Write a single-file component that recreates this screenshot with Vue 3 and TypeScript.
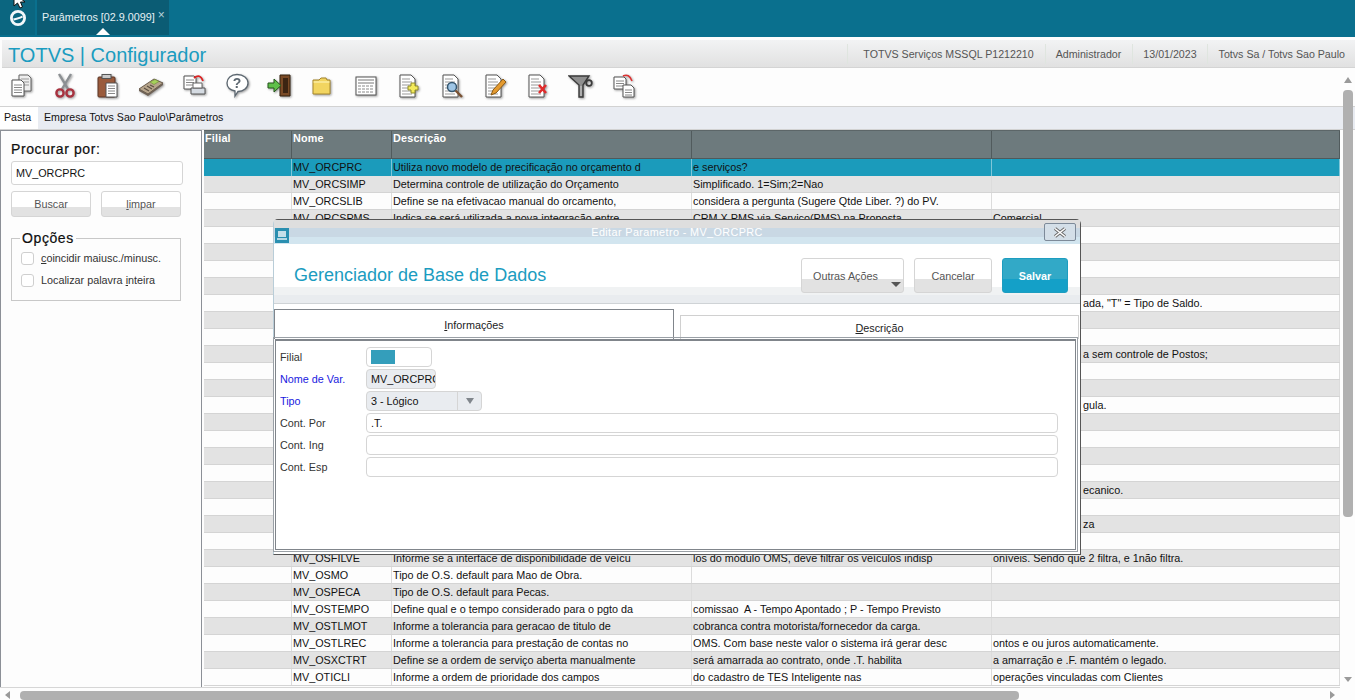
<template>
  <div class="page">
    <header class="topbar">
      <div class="logo">
        <svg width="18" height="18" viewBox="0 0 18 18">
          <circle cx="9" cy="9" r="6.6" fill="none" stroke="#f4f8fa" stroke-width="2.8" />
          <path d="M4.500 10.500 C7 9.500 11 9.500 13.500 7.500" fill="none" stroke="#f4f8fa" stroke-width="2" />
        </svg>
      </div>
      <div class="apptab">
        <span>Parâmetros [02.9.0099]</span>
        <span class="apptab-x">×</span>
        <i class="apptab-arrow"></i>
      </div>
      <svg class="cursor" width="14" height="9" viewBox="0 0 14 9">
        <path d="M1 -7 L1 6 L4.500 3 L7 8 L9.500 7 L7.500 2 L12 2 Z" fill="#fff" stroke="#111" stroke-width="1" />
      </svg>
    </header>

    <div class="titlebar">
      <h1>TOTVS | Configurador</h1>
      <ul class="status">
        <li v-for="s in statusItems" :key="s">{{ s }}</li>
      </ul>
    </div>

    <nav class="toolbar">
      <span v-for="icon in toolIcons" :key="icon" class="tool">
        <svg width="26" height="26" viewBox="0 0 26 26">
          <template v-if="icon === 'copy'">
            <path d="M10 2h9l3 3v13H10z" fill="#eee" stroke="#666" />
            <path d="M12 6h8M12 9h8M12 12h8" stroke="#999" />
            <path d="M3 7h9l3 3v13H3z" fill="#fff" stroke="#555" />
            <path d="M5 12h8M5 14.500h8M5 17h8M5 19.500h8" stroke="#888" />
          </template>
          <template v-else-if="icon === 'cut'">
            <path d="M7 1 L16 16 M19 1 L10 16" stroke="#8b8f92" stroke-width="2.400" />
            <circle cx="8" cy="20" r="3.600" fill="none" stroke="#a8323f" stroke-width="2.400" />
            <circle cx="18" cy="20" r="3.600" fill="none" stroke="#a8323f" stroke-width="2.400" />
          </template>
          <template v-else-if="icon === 'paste'">
            <rect x="3" y="4" width="17" height="20" rx="1" fill="#9a5b3c" stroke="#5b3524" />
            <rect x="7" y="1.500" width="9" height="4" fill="#c9c9c9" stroke="#555" />
            <path d="M11 10h11v14H11z" fill="#fff" stroke="#555" />
            <path d="M13 13h7M13 15.500h7M13 18h7M13 20.500h7" stroke="#888" />
          </template>
          <template v-else-if="icon === 'calc'">
            <path d="M1 16 L16 6 L25 10 L10 21 Z" fill="#b7a58c" stroke="#6a5c4b" />
            <path d="M1 16 L10 21 L25 10 L25 12 L10 23 L1 18 Z" fill="#6f6256" />
            <path d="M12 9 L17 6.500 L21 8.500 L16 11.500 Z" fill="#a6d25a" stroke="#6f8a3a" stroke-width=".6" />
            <path d="M6 15 L11 18 M9 13 L14 16 M12 12 L16 14" stroke="#5c5043" stroke-width="1.200" />
          </template>
          <template v-else-if="icon === 'print'">
            <path d="M3 3h10l2 2v11H3z" fill="#fff" stroke="#555" />
            <path d="M5 7h8M5 9.500h8M5 12h8" stroke="#888" />
            <path d="M10 15h14v6H10z" fill="#d5dbe2" stroke="#555" />
            <path d="M12 10h9v5h-9z" fill="#fff" stroke="#666" />
            <path d="M13 5 Q19 0 22 8" fill="none" stroke="#d22" stroke-width="1.800" />
          </template>
          <template v-else-if="icon === 'help'">
            <path d="M13 1.500c6.500 0 11 3.600 11 8.500s-4.500 8.500-10 8.500l-3 4.500v-5c-4.500-1-8-4-8-8 0-4.900 4-8.500 10-8.500z" fill="#fff" stroke="#5c6770" stroke-width="1.300" />
            <text x="13" y="15" text-anchor="middle" class="help-mark">?</text>
          </template>
          <template v-else-if="icon === 'exit'">
            <path d="M13 2h10v21H13z" fill="#7a4a26" stroke="#33200f" />
            <path d="M16 5h5v15h-5z" fill="#3c2412" />
            <path d="M1 10h6V6l7 6.500-7 6.500v-4H1z" fill="#5fbf4a" stroke="#26561c" />
          </template>
          <template v-else-if="icon === 'folder'">
            <path d="M3 7h6l2-2h5l1 2h3v14H3z" fill="#f2d560" stroke="#a6862a" />
            <path d="M3.500 9h16" stroke="#fff7c0" />
          </template>
          <template v-else-if="icon === 'table'">
            <rect x="3" y="4" width="20" height="18" fill="#fff" stroke="#555" />
            <path d="M5 7h16M5 10h16" stroke="#777" />
            <path d="M5 13h16M5 16h16M5 19h16" stroke="#888" stroke-dasharray="3 1" />
          </template>
          <template v-else-if="icon === 'filter'">
            <path d="M1 3 H21 L15 12 V24 H11 V12 Z" fill="#8f8f8f" stroke="#3b3b3b" stroke-width="1.400" />
            <path d="M13 13 V23" stroke="#cfcfcf" />
            <circle cx="21" cy="10" r="2.800" fill="none" stroke="#3b3b3b" stroke-width="1.800" />
          </template>
          <template v-else-if="icon === 'move'">
            <path d="M3 4h10l2 2v10H3z" fill="#fff" stroke="#555" />
            <path d="M5 8h8M5 10.500h8M5 13h8" stroke="#888" />
            <path d="M12 12h8l3 3v9H12z" fill="#fff" stroke="#555" />
            <path d="M14 17h7M14 19.500h7M14 22h7" stroke="#888" />
            <path d="M12 3 Q18 0 21 8" fill="none" stroke="#d33" stroke-width="1.600" />
          </template>
          <template v-else>
            <path d="M4 2h11l4 4v18H4z" fill="#fff" stroke="#555" />
            <path d="M6 6h8M6 9h10M6 12h10M6 15h10M6 18h10M6 21h10" stroke="#999" />
            <path v-if="icon === 'add'" d="M15 10h4v3h3v4h-3v3h-4v-3h-3v-4h3z" fill="#f3ea5a" stroke="#8f8a2b" />
            <template v-else-if="icon === 'find'">
              <circle cx="13" cy="14" r="4.500" fill="#9fc6e6" stroke="#35566f" stroke-width="1.500" />
              <path d="M16.500 17.500 L23 24" stroke="#7a5233" stroke-width="2.400" />
            </template>
            <path v-else-if="icon === 'edit'" d="M9 22 L11 17 L21 6 L24 9 L14 20 Z" fill="#e49a2f" stroke="#8a5a17" />
            <path v-else-if="icon === 'del'" d="M14 12 L21 20 M21 12 L14 20" stroke="#e02b2b" stroke-width="2.600" />
          </template>
        </svg>
      </span>
    </nav>

    <div class="pathbar">
      <div class="pathbar-tab">Pasta</div>
      <div class="pathbar-text">Empresa Totvs Sao Paulo\Parâmetros</div>
    </div>

    <main class="content">
      <aside class="side">
        <h2>Procurar por:</h2>
        <div class="field">MV_ORCPRC</div>
        <div class="side-buttons">
          <button>Buscar</button>
          <button><u>l</u>impar</button>
        </div>
        <fieldset>
          <legend>Opções</legend>
          <label><i class="check"></i><span><u>c</u>oincidir maiusc./minusc.</span></label>
          <label><i class="check"></i><span>Localizar palavra <u>i</u>nteira</span></label>
        </fieldset>
      </aside>

      <section class="grid">
        <div class="grid-head">
          <div>Filial</div>
          <div>Nome</div>
          <div>Descrição</div>
          <div></div>
          <div></div>
        </div>
        <div v-for="(row, i) in rows" :key="i" class="grid-row" :class="{ selected: i === 0, odd: i % 2 === 1 }">
          <div></div>
          <div>{{ row[0] }}</div>
          <div>{{ row[1] }}</div>
          <div>{{ row[2] }}</div>
          <div>{{ row[3] }}</div>
        </div>
      </section>

      <!-- janela modal -->
      <div class="dialog">
        <div class="dialog-title">
          <span class="dialog-icon">
            <svg width="14" height="15" viewBox="0 0 14 15">
              <rect width="14" height="15" fill="#2a8fb0" />
              <rect x="3" y="3" width="8" height="6" fill="#c5dfe9" />
              <path d="M2 11h10" stroke="#e4f1f6" stroke-width="1.500" />
            </svg>
          </span>
          <span class="dialog-caption">Editar Parametro - MV_ORCPRC</span>
          <span class="dialog-close">
            <svg width="16" height="11" viewBox="0 0 16 11">
              <path d="M3 1.500 L13 9.500 M13 1.500 L3 9.500" stroke="#666" stroke-width="3.400" />
              <path d="M3 1.500 L13 9.500 M13 1.500 L3 9.500" stroke="#fff" stroke-width="1.600" />
            </svg>
          </span>
        </div>
        <div class="dialog-head">
          <div class="dialog-name">Gerenciador de Base de Dados</div>
          <div class="dialog-actions">
            <button class="more">Outras Ações<i></i></button>
            <button class="cancel">Cancelar</button>
            <button class="save">Salvar</button>
          </div>
        </div>
        <div class="dialog-strip"></div>
        <div class="tabs">
          <div class="tab active"><u>I</u>nformações</div>
          <div class="tab"><u>D</u>escrição</div>
        </div>
        <div class="form">
          <div class="form-row">
            <label>Filial</label>
            <div class="filial"><i></i></div>
          </div>
          <div class="form-row">
            <label class="req">Nome de Var.</label>
            <div class="input readonly name">MV_ORCPRC</div>
          </div>
          <div class="form-row">
            <label class="req">Tipo</label>
            <div class="input readonly combo">
              <span>3 - Lógico</span>
              <b><i></i></b>
            </div>
          </div>
          <div class="form-row">
            <label>Cont. Por</label>
            <div class="input wide">.T.</div>
          </div>
          <div class="form-row">
            <label>Cont. Ing</label>
            <div class="input wide"></div>
          </div>
          <div class="form-row">
            <label>Cont. Esp</label>
            <div class="input wide"></div>
          </div>
        </div>
      </div>
    </main>

    <div class="hscroll">
      <i class="arrow-left"></i>
      <i class="hthumb"></i>
      <i class="arrow-right"></i>
    </div>

    <div class="vscroll">
      <i class="arrow-up"></i>
      <i class="vthumb"></i>
      <i class="arrow-down"></i>
    </div>
  </div>
</template>

<script setup lang="ts">
const statusItems: string[] = [
  'TOTVS Serviços MSSQL P1212210',
  'Administrador',
  '13/01/2023',
  'Totvs Sa / Totvs Sao Paulo',
]

const toolIcons: string[] = [
  'copy', 'cut', 'paste', 'calc', 'print', 'help', 'exit', 'folder',
  'table', 'add', 'find', 'edit', 'del', 'filter', 'move',
]

// o texto da última coluna aparece só depois da janela modal
const behind = ' '.repeat(30)

// nome, descrição, continuação 1, continuação 2
const rows: string[][] = [
  ['MV_ORCPRC', 'Utiliza novo modelo de precificação no orçamento d', 'e serviços?', ''],
  ['MV_ORCSIMP', 'Determina controle de utilização do Orçamento', 'Simplificado. 1=Sim;2=Nao', ''],
  ['MV_ORCSLIB', 'Define se na efetivacao manual do orcamento,', 'considera a pergunta (Sugere Qtde Liber. ?) do PV.', ''],
  ['MV_ORCSPMS', 'Indica se será utilizada a nova integração entre', 'CRM X PMS via Serviço(PMS) na Proposta', 'Comercial'],
  ['', '', '', ''],
  ['', '', '', ''],
  ['', '', '', ''],
  ['', '', '', ''],
  ['', '', '', behind + 'ada, "T" = Tipo de Saldo.'],
  ['', '', '', ''],
  ['', '', '', ''],
  ['', '', '', behind + 'a sem controle de Postos;'],
  ['', '', '', ''],
  ['', '', '', ''],
  ['', '', '', behind + 'gula.'],
  ['', '', '', ''],
  ['', '', '', ''],
  ['', '', '', ''],
  ['', '', '', ''],
  ['', '', '', behind + 'ecanico.'],
  ['', '', '', ''],
  ['', '', '', behind + 'za'],
  ['', '', '', ''],
  ['MV_OSFILVE', 'Informe se a interface de disponibilidade de veícu', 'los do módulo OMS, deve filtrar os veículos indisp', 'oníveis. Sendo que 2 filtra, e 1não filtra.'],
  ['MV_OSMO', 'Tipo de O.S. default para Mao de Obra.', '', ''],
  ['MV_OSPECA', 'Tipo de O.S. default para Pecas.', '', ''],
  ['MV_OSTEMPO', 'Define qual e o tempo considerado para o pgto da', 'comissao  A - Tempo Apontado ; P - Tempo Previsto', ''],
  ['MV_OSTLMOT', 'Informe a tolerancia para geracao de titulo de', 'cobranca contra motorista/fornecedor da carga.', ''],
  ['MV_OSTLREC', 'Informe a tolerancia para prestação de contas no', 'OMS. Com base neste valor o sistema irá gerar desc', 'ontos e ou juros automaticamente.'],
  ['MV_OSXCTRT', 'Define se a ordem de serviço aberta manualmente', 'será amarrada ao contrato, onde .T. habilita', 'a amarração e .F. mantém o legado.'],
  ['MV_OTICLI', 'Informe a ordem de prioridade dos campos', 'do cadastro de TES Inteligente nas', 'operações vinculadas com Clientes'],
]
</script>

<style>
html,
body {
  margin: 0;
  background: #fff;
}
</style>

<style scoped>
.page {
  position: relative;
  width: 1355px;
  height: 700px;
  overflow: hidden;
  display: flex;
  flex-direction: column;
  font-family: "Liberation Sans", Arial, sans-serif;
  font-size: 10.8px;
  color: #111;
  background: #fdfdfd;
}

/* barra superior */
.topbar {
  position: relative;
  flex: 0 0 37px;
  display: flex;
  background: #0a708e;
}
.logo {
  width: 35px;
  height: 35px;
  display: flex;
  align-items: center;
  justify-content: center;
  background: #0b6680;
}
.apptab {
  position: relative;
  margin-left: 2px;
  width: 132px;
  height: 35px;
  box-sizing: border-box;
  padding: 11px 0 0 5px;
  display: flex;
  gap: 3px;
  color: #e6f1f5;
  background: #0b5c74;
  line-height: 12px;
}
.apptab-x {
  font-size: 12px;
  line-height: 9px;
  color: #b9d2da;
}
.apptab-arrow {
  position: absolute;
  left: 59px;
  bottom: 0;
  border-left: 7px solid transparent;
  border-right: 7px solid transparent;
  border-bottom: 7px solid #fff;
}
.cursor {
  position: absolute;
  left: 13px;
  top: 0;
}

/* título */
.titlebar {
  flex: 0 0 28px;
  margin: 3px 0 0 2px;
  overflow: hidden;
  display: flex;
  justify-content: space-between;
  background: linear-gradient(#f2f3f4, #e1e1e1);
  border-bottom: 1px solid #d4d4d4;
  box-sizing: border-box;
}
.titlebar h1 {
  margin: 0 0 0 6px;
  font-size: 20px;
  font-weight: 400;
  line-height: 30px;
  color: #1b9cc0;
}
.status {
  list-style: none;
  margin: 4px 0 0;
  padding: 0;
  display: flex;
  height: 20px;
  font-size: 10.65px;
  color: #555;
}
.status li {
  padding: 0 10px;
  line-height: 20px;
  border-left: 1px solid #dfe5df;
}
.status li:first-child {
  padding-left: 15px;
  padding-right: 11px;
}
.status li:nth-child(2) {
  padding-right: 11px;
}
.status li:last-child {
  padding-left: 11px;
}

/* ícones */
.toolbar {
  flex: 0 0 38px;
  box-sizing: border-box;
  padding: 0 0 3px 9px;
  display: flex;
  align-items: center;
  background: #fdfdfd;
}
.tool {
  width: 43px;
  display: flex;
}
.tool svg {
  filter: drop-shadow(1px 1px 1px #999);
}
.help-mark {
  font-family: "Liberation Sans", Arial, sans-serif;
  font-size: 14px;
  font-weight: 700;
  fill: #5c6770;
}

.pathbar {
  flex: 0 0 24px;
  box-sizing: border-box;
  display: flex;
  font-size: 10.6px;
  line-height: 21px;
  border-top: 1px solid #d2d2d2;
  border-bottom: 1px solid #d2d2d2;
  background: #e9ecf2;
}
.pathbar-tab {
  width: 38px;
  padding-left: 4px;
  box-sizing: border-box;
  background: #fff;
}
.pathbar-text {
  padding-left: 6px;
}

/* área principal */
.content {
  position: relative;
  flex: 1;
  min-height: 0;
  display: flex;
  background: #fdfdfd;
}
.side {
  flex: 0 0 202px;
  box-sizing: border-box;
  padding: 11px 0 0 10px;
  border-left: 1px solid #8c9097;
  border-right: 1px solid #8c9097;
  border-top: 1px solid #8c9097;
  background: #fdfdfd;
}
.side h2 {
  margin: 0;
  font-size: 14px;
  font-weight: 400;
  letter-spacing: .6px;
  line-height: 14px;
  -webkit-text-stroke: .2px #000;
}
.field {
  margin-top: 5px;
  height: 24px;
  width: 172px;
  box-sizing: border-box;
  padding-left: 4px;
  line-height: 22px;
  border: 1px solid #d5d5d5;
  border-radius: 3px;
  background: #fff;
}
.side-buttons {
  margin-top: 6px;
  display: flex;
  gap: 10px;
}
.side-buttons button {
  width: 80px;
  height: 26px;
  padding: 0;
  font: inherit;
  color: #555;
  border: 1px solid #d5d5d5;
  border-radius: 3px;
  background: linear-gradient(#fff 0, #fff 61%, #e2e2e2 61%);
}
fieldset {
  margin: 14px 0 0;
  padding: 2px 0 0;
  width: 170px;
  height: 70px;
  border: 1px solid #c8c8c8;
  box-sizing: border-box;
}
legend {
  margin-left: 8px;
  padding: 0 2px;
  font-size: 14px;
  line-height: 14px;
  letter-spacing: .6px;
  -webkit-text-stroke: .2px #000;
}
fieldset label {
  display: flex;
  align-items: center;
  gap: 7px;
  height: 22px;
  padding-left: 9px;
  color: #333;
}
.check {
  width: 13px;
  height: 13px;
  box-sizing: border-box;
  border: 1px solid #cfcfcf;
  border-radius: 3px;
  background: #fff;
}

/* grade */
.grid {
  width: 1136px;
  margin-left: 2px;
  flex: none;
  overflow: hidden;
}
.grid-head,
.grid-row {
  display: grid;
  grid-template-columns: 88px 100px 300px 300px 348px;
}
.grid-head {
  height: 29px;
  box-sizing: border-box;
  line-height: 15px;
  font-weight: 700;
  color: #fff;
  letter-spacing: .2px;
  background: #6d7a7d;
  border-top: 1px solid #5c6668;
  border-bottom: 1px solid #4f595b;
}
.grid-head div {
  padding-left: 1px;
  border-right: 1px solid #515b5d;
}
.grid-row {
  height: 17px;
  box-sizing: border-box;
  line-height: 16px;
  white-space: pre;
  border-bottom: 1px solid #d4d4d4;
}
.grid-row div {
  padding-left: 1px;
  overflow: hidden;
  border-right: 1px solid #dcdcdc;
}
.grid-row.odd {
  background: #e3e3e3;
}
.grid-row.selected {
  background: #1b9bbb;
  border-bottom: 0;
}
.grid-row.selected div {
  border-right-color: #7fc6d8;
}

/* barras de rolagem */
.vscroll {
  position: absolute;
  right: 2px;
  top: 77px;
  bottom: 18px;
  width: 10px;
  display: flex;
  flex-direction: column;
  align-items: center;
}
.arrow-up {
  border-left: 4px solid transparent;
  border-right: 4px solid transparent;
  border-bottom: 6px solid #9a9a9a;
}
.vthumb {
  margin-top: 7px;
  width: 10px;
  height: 427px;
  border-radius: 4px;
  background: #b0b0b0;
}
.arrow-down {
  margin-top: auto;
  border-left: 4px solid transparent;
  border-right: 4px solid transparent;
  border-top: 5px solid #9a9a9a;
}
.hscroll {
  flex: 0 0 13px;
  box-sizing: border-box;
  width: 1340px;
  display: flex;
  align-items: flex-end;
  padding-left: 5px;
  border-top: 1px solid #d6d6d6;
  background: #fdfdfd;
}
.hthumb {
  margin-left: 10px;
  width: 999px;
  height: 9px;
  border-radius: 4px;
  background: #b0b0b0;
}
.arrow-left {
  margin-bottom: 1px;
  border-top: 4px solid transparent;
  border-bottom: 4px solid transparent;
  border-right: 5px solid #9a9a9a;
}
.arrow-right {
  margin: 0 0 1px 311px;
  border-top: 4px solid transparent;
  border-bottom: 4px solid transparent;
  border-left: 5px solid #9a9a9a;
}

/* modal */
.dialog {
  position: absolute;
  left: 273px;
  top: 89px;
  width: 808px;
  height: 336px;
  box-sizing: border-box;
  display: flex;
  flex-direction: column;
  background: #fff;
  border: 1px solid #555;
  border-left-color: #b9cdd8;
  border-radius: 5px 5px 0 0;
}
.dialog-title {
  position: relative;
  flex: 0 0 24px;
  display: flex;
  align-items: center;
  justify-content: center;
  background: linear-gradient(#dedede 0, #dedede 8px, #c9d8e4 8px, #c9d8e4 17px, #d2e5ef 17px);
}
.dialog-icon {
  position: absolute;
  left: 1px;
  top: 8px;
  display: flex;
}
.dialog-caption {
  color: #fff;
  letter-spacing: .4px;
}
.dialog-close {
  position: absolute;
  right: 4px;
  top: 3px;
  width: 32px;
  height: 18px;
  box-sizing: border-box;
  display: flex;
  align-items: center;
  justify-content: center;
  border: 1px solid #7d8a99;
  border-radius: 2px;
  background: #d4dfe8;
}
.dialog-head {
  flex: 0 0 43px;
  min-height: 0;
  display: flex;
  justify-content: space-between;
  position: relative;
}
.dialog-name {
  padding: 21px 0 0 20px;
  font-size: 18px;
  line-height: 20px;
  color: #1b9cc0;
}
.dialog-actions {
  display: flex;
  gap: 10px;
  margin: 14px 12px 0 0;
  height: 35px;
  z-index: 1;
}
.dialog-actions button {
  height: 35px;
  padding: 0;
  font: inherit;
  border-radius: 3px;
}
.more,
.cancel {
  position: relative;
  color: #555;
  border: 1px solid #d5d5d5;
  background: linear-gradient(#fff 0, #fff 62%, #e2e2e2 62%);
}
.more {
  width: 103px;
  padding-right: 14px !important;
}
.more i {
  position: absolute;
  right: 2px;
  bottom: 5px;
  border-left: 5px solid transparent;
  border-right: 5px solid transparent;
  border-top: 5px solid #555;
}
.cancel {
  width: 78px;
}
.save {
  width: 66px;
  color: #fff;
  font-weight: 700 !important;
  border: 1px solid #1d9dc0;
  background: linear-gradient(#32a9c7 0, #32a9c7 62%, #14a0c8 62%);
}
.dialog-strip {
  flex: 0 0 17px;
  box-sizing: border-box;
  border-bottom: 1px solid #cfd3d6;
  background: linear-gradient(#f0f2f3 0, #f0f2f3 50%, #e9ecef 50%);
}
.tabs {
  flex: 0 0 35px;
  display: flex;
  align-items: flex-end;
  gap: 6px;
}
.tab {
  box-sizing: border-box;
  height: 24px;
  flex: 0 0 399px;
  text-align: center;
  line-height: 24px;
  color: #222;
  border: 1px solid #d0d0d0;
  border-bottom: 0;
}
.tab.active {
  flex: 0 0 400px;
  height: 30px;
  line-height: 30px;
  border: 1px solid #80858b;
  border-bottom: 0;
}
.form {
  flex: 1;
  min-height: 0;
  box-sizing: border-box;
  margin: 0 4px 4px 1px;
  padding: 6px 0 0 4px;
  display: flex;
  flex-direction: column;
  gap: 2px;
  border: 1px solid #80858b;
  border-top-width: 2px;
  outline: 1px solid #9aa0a6;
  outline-offset: 1px;
}
.form-row {
  display: flex;
  align-items: center;
  height: 20px;
}
.form-row label {
  flex: 0 0 86px;
  color: #333;
}
.form-row label.req {
  color: #1a1ae0;
}
.filial {
  box-sizing: border-box;
  width: 66px;
  height: 20px;
  padding: 2px 4px;
  border: 1px solid #d5d5d5;
  border-radius: 4px;
}
.filial i {
  display: block;
  width: 24px;
  height: 14px;
  background: #349ebb;
}
.input {
  box-sizing: border-box;
  height: 20px;
  padding-left: 4px;
  line-height: 18px;
  overflow: hidden;
  border: 1px solid #d5d5d5;
  border-radius: 4px;
  background: #fff;
}
.input.readonly {
  background: #e9ecf0;
}
.name {
  width: 70px;
}
.combo {
  width: 116px;
  padding: 0 0 0 4px;
  display: flex;
  justify-content: space-between;
}
.combo b {
  width: 23px;
  display: flex;
  justify-content: center;
  align-items: center;
  border-left: 1px solid #d5d5d5;
}
.combo i {
  border-left: 4.5px solid transparent;
  border-right: 4.5px solid transparent;
  border-top: 6px solid #80868c;
}
.wide {
  width: 692px;
}
</style>
